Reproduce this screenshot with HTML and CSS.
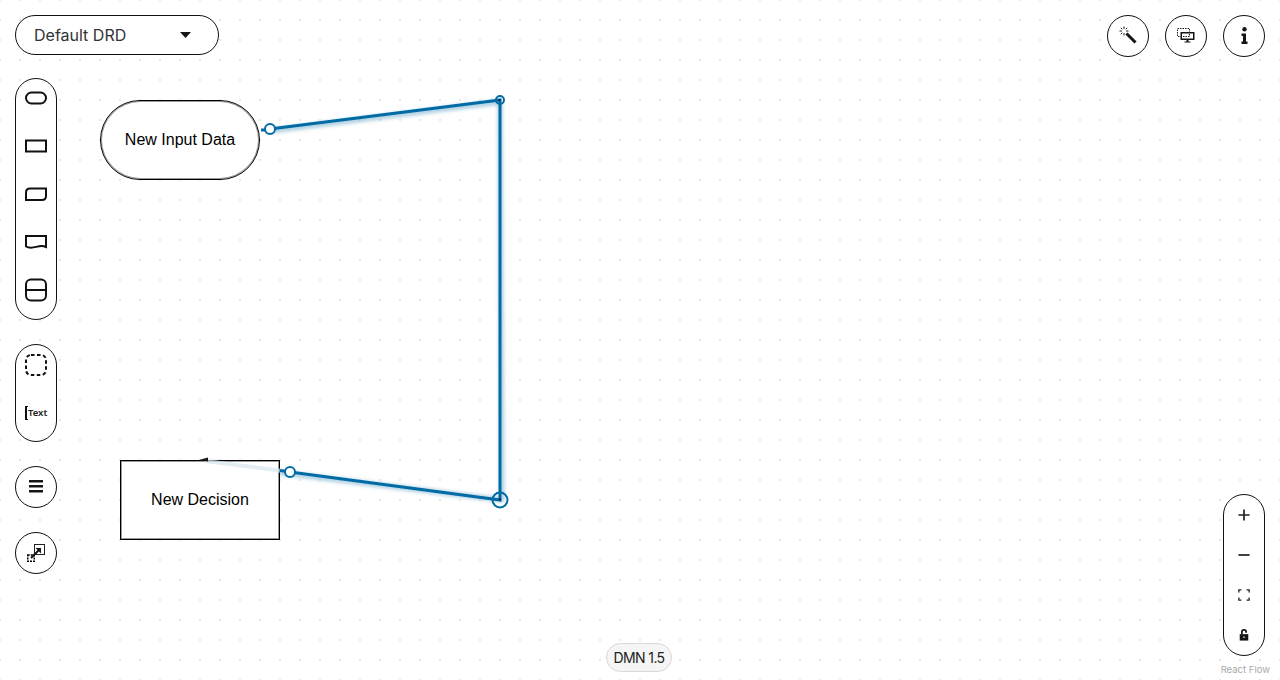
FILE: index.html
```html
<!DOCTYPE html>
<html lang="en">

<head>
    <meta charset="UTF-8">
    <title>Default DRD</title>
    <link rel="stylesheet" href="styles.css">
</head>

<body>
    <div class="canvas">
        <!-- diagram: nodes and edge sit on a free canvas -->
        <svg class="edges" width="1280" height="680" viewBox="0 0 1280 680">
            <defs>
                <filter id="glow" x="-20%" y="-20%" width="140%" height="140%">
                    <feGaussianBlur stdDeviation="2" />
                </filter>
            </defs>
            <path class="edge-glow" filter="url(#glow)" d="M270 131 L500 102 L502 500 L290 474 L205 463" />
        </svg>

        <div class="node node-input">New Input Data</div>
        <div class="node node-decision">New Decision</div>

        <svg class="edges" width="1280" height="680" viewBox="0 0 1280 680">
            <path class="edge-fade" d="M290 472 L205 461" />
            <path class="edge-line" d="M261 130 H268 L270 129 L500 100 L500 500 L290 472" />
            <path class="edge-line" d="M280 470.500 L290 472" />
            <path class="arrow" d="M199 460 L208 457.500 L208 461.500 Z" />
            <circle class="handle" cx="270" cy="129" r="5" />
            <circle class="handle" cx="290" cy="472" r="5" />
            <circle class="handle-open" cx="500" cy="100" r="4" />
            <circle class="handle-dot" cx="499.500" cy="100" r="1" />
            <circle class="handle-open" cx="500" cy="500" r="7.500" />
            <circle class="handle-dot" cx="500" cy="499.500" r="1" />
        </svg>

        <div class="ui">
            <div class="col-left">
                <div class="selector">
                    <span>Default DRD</span>
                    <svg width="11" height="6" viewBox="0 0 11 6"><path class="fill" d="M0 0 H11 L5.500 6 Z" /></svg>
                </div>

                <div class="pill palette">
                    <svg class="item" width="24" height="24" viewBox="0 0 24 24"><rect class="shape" x="2" y="6.500" width="20" height="11" rx="5.500" /></svg>
                    <svg class="item" width="24" height="24" viewBox="0 0 24 24"><rect class="shape" x="2" y="6.500" width="20" height="11" /></svg>
                    <svg class="item" width="24" height="24" viewBox="0 0 24 24"><path class="shape" d="M6 6.500 H22 V14 Q22 18 18 18 H2 V10.500 Q2 6.500 6 6.500 Z" /></svg>
                    <svg class="item" width="24" height="24" viewBox="0 0 24 24"><path class="shape" d="M2 6 H22 V17 C15 13.500 9 20.500 2 16.500 Z" /></svg>
                    <svg class="item" width="24" height="24" viewBox="0 0 24 24"><rect class="shape" x="2" y="1.500" width="20" height="21" rx="5" /><path class="shape" d="M2 12 H22" /></svg>
                </div>

                <div class="pill palette-small">
                    <svg class="item" width="24" height="24" viewBox="0 0 24 24"><rect class="shape dashed" x="2" y="2" width="20" height="20" rx="5" /></svg>
                    <div class="item text-item"><span class="bracket"></span><span class="text-label">Text</span></div>
                </div>

                <div class="pill round">
                    <svg class="lift" width="14" height="13" viewBox="0 0 14 13"><path class="fill" d="M0 0 H14 V2.500 H0 Z M0 5 H14 V7.500 H0 Z M0 10 H14 V12.500 H0 Z" /></svg>
                </div>

                <div class="pill round">
                    <svg width="18" height="18" viewBox="0 0 18 18">
                        <rect class="thin" x="7.500" y="0.500" width="10" height="10" />
                        <rect class="dark-dash" x="0.750" y="11" width="6.500" height="6.250" />
                        <path class="shape" d="M4 14 L12 6" />
                        <path class="fill" d="M8.500 4 H14 V9.500 Z" />
                    </svg>
                </div>
            </div>

            <div class="col-right">
                <div class="actions">
                    <div class="pill round">
                        <svg class="lift" width="18" height="18" viewBox="0 0 18 18">
                            <path class="wand" d="M7.500 7.500 L16.500 16.500" />
                            <path class="thin" d="M5 0.500 V3 M5 7 V9.500 M0.500 5 H3 M7 5 H9.500 M1.800 1.800 L3.300 3.300 M8.200 1.800 L6.700 3.300 M1.800 8.200 L3.300 6.700" />
                        </svg>
                    </div>
                    <div class="pill round">
                        <svg width="18" height="16" viewBox="0 0 18 16">
                            <rect class="thin dashed-thin" x="0.500" y="0.500" width="12" height="8" />
                            <path class="fill" fill-rule="evenodd" d="M3.500 4 H17.500 V12 H11.500 V13.500 H13.500 V14.500 H7.500 V13.500 H9.500 V12 H3.500 Z M5 5.500 V10.500 H16 V5.500 Z" />
                        </svg>
                    </div>
                    <div class="pill round">
                        <svg class="lift" width="7" height="17" viewBox="0 0 7 17">
                            <circle class="fill" cx="3.500" cy="2.200" r="2.200" />
                            <path class="fill" d="M0.500 6.500 H5 V14.500 H6.500 V17 H0.500 V14.500 H2 V9 H0.500 Z" />
                        </svg>
                    </div>
                </div>

                <div class="pill zoom">
                    <svg class="zoom-item" width="12" height="12" viewBox="0 0 14 14"><path class="glyph" d="M7 0.500 V13.500 M0.500 7 H13.500" /></svg>
                    <svg class="zoom-item" width="12" height="12" viewBox="0 0 14 14"><path class="glyph" d="M0.500 7 H13.500" /></svg>
                    <svg class="zoom-item" width="12" height="12" viewBox="0 0 14 14"><path class="corners" d="M1 4 V1 H4 M10 1 H13 V4 M13 10 V13 H10 M4 13 H1 V10" /></svg>
                    <svg class="zoom-item" width="12" height="12" viewBox="0 0 14 14">
                        <path class="fill" d="M2 6 H12 V13.500 H2 Z" />
                        <path class="lock-bar" d="M4.500 6 V3.500 A2.500 2.500 0 0 1 9.500 3.500 V4.500" />
                        <circle class="hole" cx="7" cy="9.500" r="0.900" />
                    </svg>
                </div>
            </div>
        </div>

        <div class="version">DMN 1.5</div>
        <div class="attribution">React Flow</div>
    </div>
</body>

</html>
```

FILE: styles.css
```css
* {
    box-sizing: border-box;
}

body {
    margin: 0;
    font-family: Inter, Arial, sans-serif;
    color: #151515;
}

.canvas {
    position: relative;
    width: 1280px;
    height: 680px;
    overflow: hidden;
    background-color: #fff;
    background-image: radial-gradient(circle, #e8e8e8 1px, transparent 1px);
    background-size: 20px 20px;
    background-position: 10px 10px;
}

.edges {
    position: absolute;
    left: 0;
    top: 0;
    pointer-events: none;
}

.edge-line {
    fill: none;
    stroke: #006ba4;
    stroke-width: 3;
}

.edge-glow {
    fill: none;
    stroke: #006ba4;
    stroke-width: 3;
    opacity: 0.55;
}

.edge-fade {
    fill: none;
    stroke: #d5e6f0;
    stroke-width: 4;
    opacity: 0.7;
}

.arrow {
    fill: #151515;
}

.handle {
    fill: #fff;
    stroke: #006ba4;
    stroke-width: 2;
}

.handle-open {
    fill: none;
    stroke: #006ba4;
    stroke-width: 2;
}

.handle-dot {
    fill: #111;
}

.node {
    position: absolute;
    width: 160px;
    height: 80px;
    display: flex;
    align-items: center;
    justify-content: center;
    background: #fff;
    border: 1px solid #000;
    box-shadow: inset 0 0 0 1px rgba(0, 0, 0, 0.4);
    font-family: "Liberation Sans", Arial, sans-serif;
    font-size: 16px;
    color: #000;
}

.node-input {
    left: 100px;
    top: 100px;
    border-radius: 40px;
}

.node-decision {
    left: 120px;
    top: 460px;
}

.ui {
    position: absolute;
    inset: 0;
    display: flex;
    justify-content: space-between;
    padding: 15px 15px 24px;
}

.col-left {
    display: flex;
    flex-direction: column;
    align-items: flex-start;
    gap: 24px;
}

.col-right {
    display: flex;
    flex-direction: column;
    align-items: flex-end;
    justify-content: space-between;
}

.selector {
    width: 204px;
    height: 40px;
    margin-bottom: -1px;
    display: flex;
    align-items: center;
    justify-content: space-between;
    padding: 0 27px 0 18px;
    background: #fff;
    border: 1px solid #111;
    border-radius: 20px;
    font-size: 16px;
    color: #333;
}

.pill {
    width: 42px;
    display: flex;
    flex-direction: column;
    align-items: center;
    background: #fff;
    border: 1px solid #111;
    border-radius: 21px;
}

.palette {
    height: 242px;
    padding-top: 7px;
    gap: 24px;
}

.palette-small {
    height: 98px;
    padding-top: 8px;
    gap: 24px;
}

.round {
    height: 42px;
    justify-content: center;
}

.lift {
    margin-top: -2px;
}

.item {
    flex: none;
}

.text-item {
    width: 24px;
    height: 24px;
    display: flex;
    align-items: center;
    padding-left: 1px;
    gap: 0;
}

.bracket {
    flex: none;
    width: 3px;
    height: 14px;
    border: 2px solid #111;
    border-right: none;
    border-top-width: 1px;
    border-bottom-width: 1px;
}

.text-label {
    font-family: "Noto Sans", Arial, sans-serif;
    font-size: 9.500px;
    font-weight: 600;
    line-height: 1;
    color: #222;
}

.actions {
    display: flex;
    gap: 16px;
}

.zoom {
    height: 162px;
    padding-top: 14px;
    gap: 28px;
}

.zoom-item {
    flex: none;
}

.shape {
    fill: none;
    stroke: #111;
    stroke-width: 2;
}

.dashed {
    stroke-dasharray: 3.500 2.500;
}

.fill {
    fill: #151515;
}

.thin {
    fill: none;
    stroke: #222;
    stroke-width: 1;
}

.dashed-thin {
    stroke-dasharray: 1.500 1;
}

.dark-dash {
    fill: none;
    stroke: #000;
    stroke-width: 1.500;
    stroke-dasharray: 2 1;
}

.wand {
    fill: none;
    stroke: #151515;
    stroke-width: 3;
}

.glyph {
    fill: none;
    stroke: #222;
    stroke-width: 2;
}

.corners {
    fill: none;
    stroke: #222;
    stroke-width: 1.500;
}

.lock-bar {
    fill: none;
    stroke: #151515;
    stroke-width: 2;
}

.hole {
    fill: #fff;
}

.version {
    position: absolute;
    left: 606px;
    top: 643px;
    width: 66px;
    height: 29px;
    display: flex;
    align-items: center;
    justify-content: center;
    background: #f5f5f5;
    border: 1px solid #d8d8d8;
    border-radius: 15px;
    font-size: 14px;
    letter-spacing: -0.600px;
    color: #222;
}

.attribution {
    position: absolute;
    right: 10px;
    top: 663px;
    font-size: 9.500px;
    line-height: 14px;
    color: #aaa;
}
```
